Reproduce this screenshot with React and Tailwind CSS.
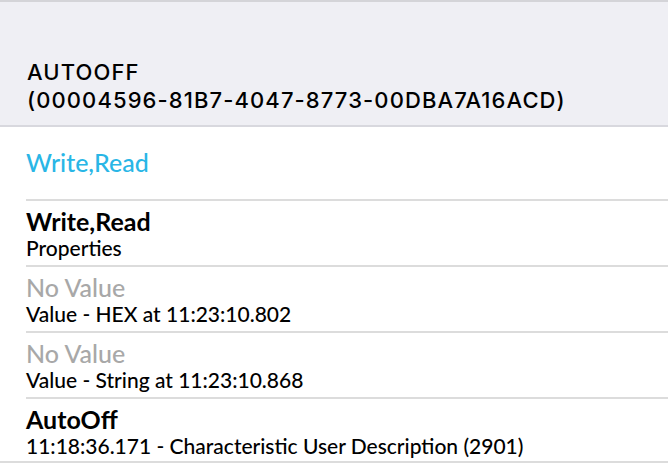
export default function App() {
  const body = { fontFamily: "Lato, 'Noto Sans', sans-serif" };
  const rows = [
    { t: "Write,Read", s: "Properties", tc: "text-black font-bold" },
    { t: "No Value", s: "Value - HEX at 11:23:10.802", tc: "text-[#a8a8a8] font-medium" },
    { t: "No Value", s: "Value - String at 11:23:10.868", tc: "text-[#a8a8a8] font-medium" },
  ];
  return (
    <div className="w-[668px] h-[464px] bg-white overflow-hidden">
      <div className="h-[2px] bg-[#d4d4d8]" />
      <div
        className="h-[125px] bg-[#efeff4] border-b-2 border-[#d8d8de] px-[27px] pt-[56px] text-[22px] leading-[28px] font-medium tracking-[1.1px] text-black"
        style={{ fontFamily: "Inter, 'Liberation Sans', sans-serif" }}
      >
        <div>AUTOOFF</div>
        <div>(00004596-81B7-4047-8773-00DBA7A16ACD)</div>
      </div>
      <div style={body}>
        <div className="h-[72px] flex items-center px-[26px] text-[25px] font-medium text-[#29b6e6]">
          Write,Read
        </div>
        {rows.map((r, i) => (
          <div key={i} className="ml-[26px] border-t-2 border-[#dcdcdc] h-[66px] pt-[6px]">
            <div className={"text-[25px] leading-[28px] " + r.tc}>{r.t}</div>
            <div className="text-[21px] leading-[26px] font-medium text-black">{r.s}</div>
          </div>
        ))}
        <div className="ml-[26px] border-t-2 border-[#dcdcdc] h-[64px] pt-[6px]">
          <div className="text-[25px] leading-[28px] text-black font-bold">AutoOff</div>
          <div className="text-[21px] leading-[26px] font-medium text-black">
            11:18:36.171 - Characteristic User Description (2901)
          </div>
        </div>
        <div className="border-t-2 border-[#dcdcdc]" />
      </div>
    </div>
  );
}
